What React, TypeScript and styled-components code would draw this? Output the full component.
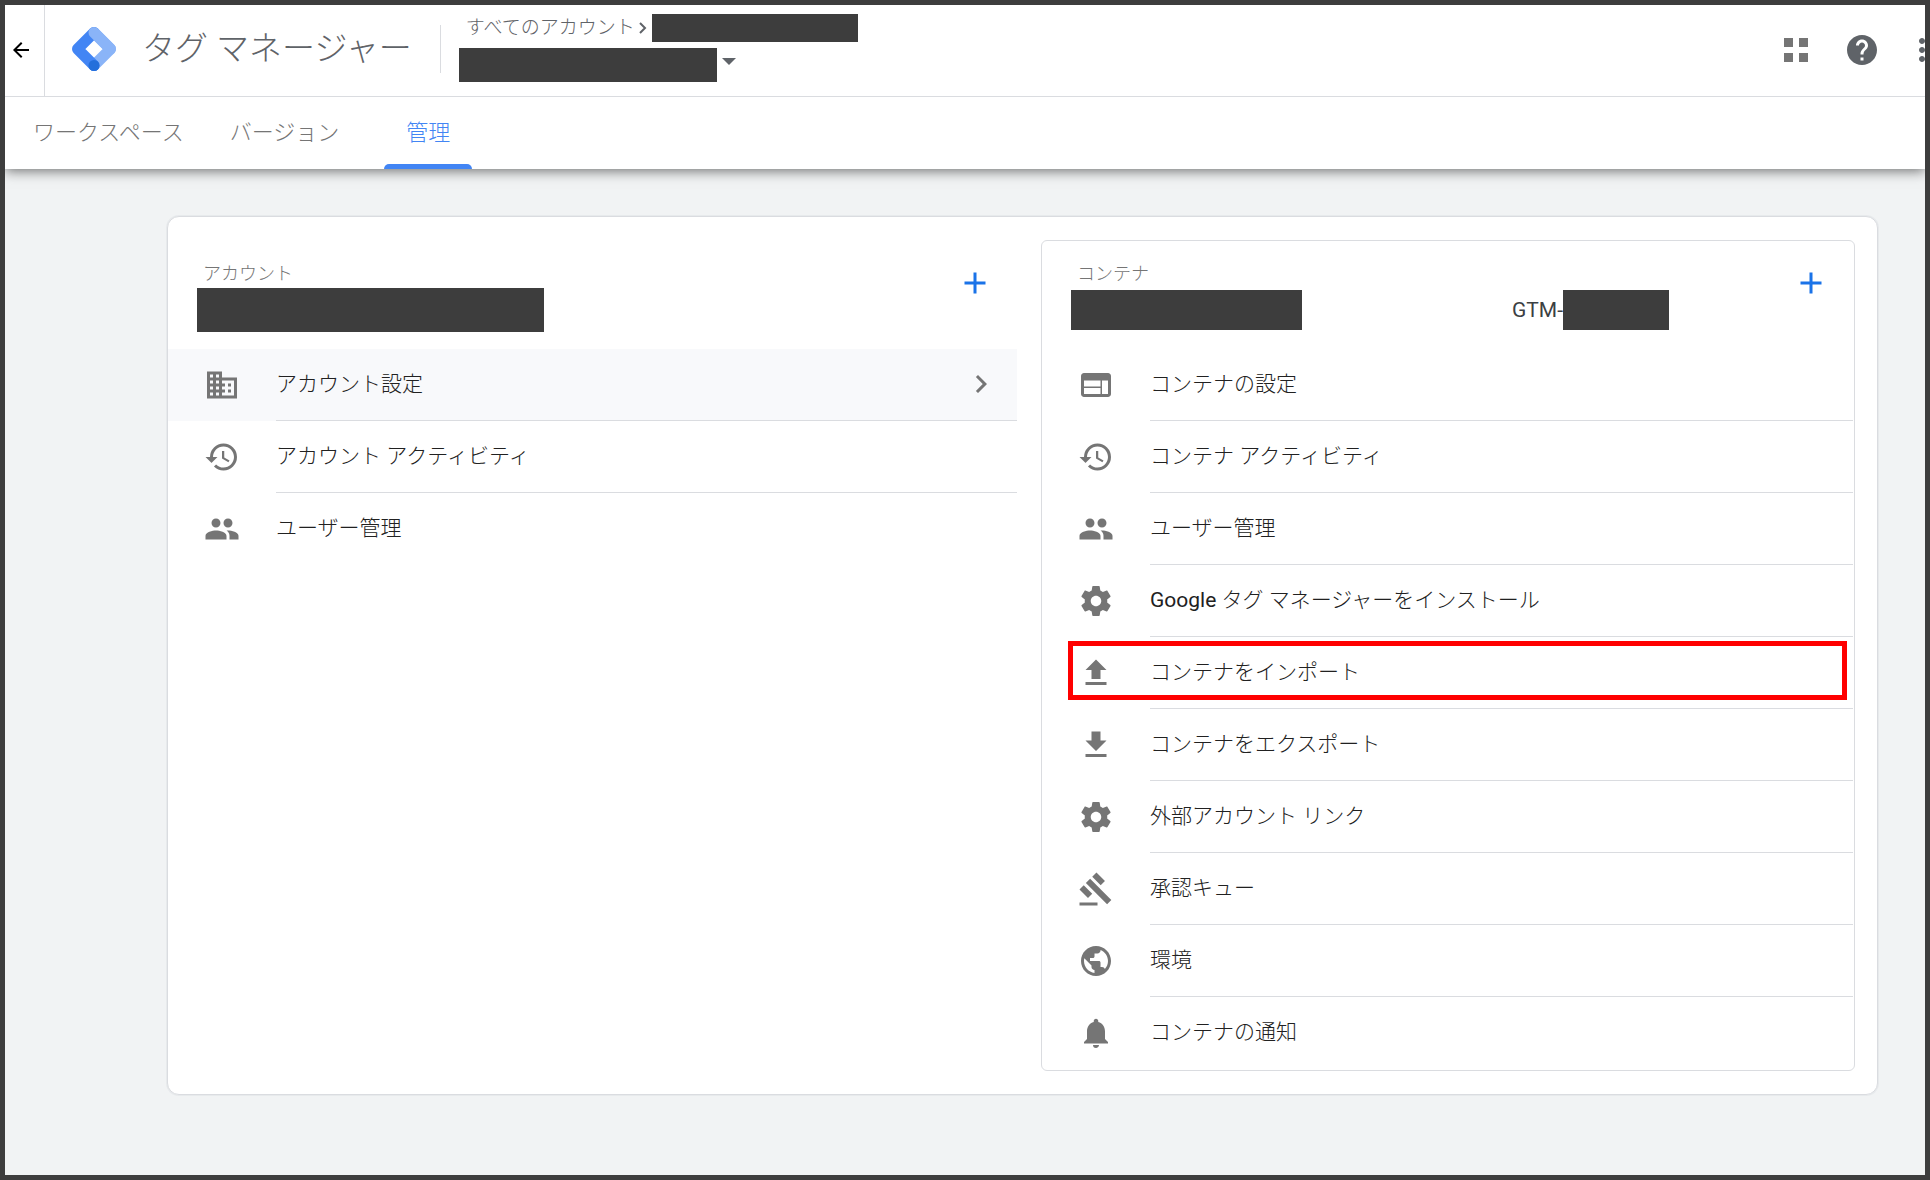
import React from "react";
import styled, { createGlobalStyle, css } from "styled-components";
import {
  MdArrowBack,
  MdChevronRight,
  MdAdd,
  MdGavel,
  MdHelp,
  MdHistory,
  MdMoreVert,
  MdNotifications,
  MdPublic,
} from "react-icons/md";

const color = {
  frame: "#3d3d3d",
  line: "#dadce0",
  page: "#f1f3f4",
  ink: "#212121",
  soft: "#5f6368",
  icon: "#757575",
  blue: "#4285f4",
  action: "#1a73e8",
  hover: "#f8f9fb",
  mark: "#ff0000",
};

const GlobalStyle = createGlobalStyle`
  *, *::before, *::after { box-sizing: border-box; }
  body {
    margin: 0;
    background: ${color.page};
    font-family: Roboto, "Noto Sans CJK JP", sans-serif;
    font-weight: 300;
    color: ${color.ink};
  }
  a { color: inherit; text-decoration: none; }
  button { padding: 0; border: 0; background: none; font: inherit; color: inherit; cursor: pointer; }
  ul { margin: 0; padding: 0; list-style: none; }
  svg { display: block; flex: none; }
`;

const Frame = styled.div`
  min-height: 100vh;
  border: 5px solid ${color.frame};
  overflow: hidden;
`;

const Header = styled.header`
  position: relative;
  background: #fff;
  box-shadow: 0 2px 12px rgba(0, 0, 0, 0.55);
`;

const TopBar = styled.div`
  display: flex;
  align-items: stretch;
  height: 92px;
  border-bottom: 1px solid ${color.line};
`;

const BackButton = styled.button`
  display: grid;
  place-items: center;
  width: 40px;
  padding: 0 8px 2px 0;
  border-right: 1px solid ${color.line};
  color: #000;
`;

const Brand = styled.div`
  display: flex;
  align-items: center;
  gap: 26px;
  padding: 0 28px 4px 27px;
`;

const BrandName = styled.h1`
  margin: 0;
  font-size: 33px;
  line-height: 48px;
  font-weight: 300;
  color: ${color.soft};
  white-space: nowrap;
`;

const BrandDivider = styled.div`
  width: 1px;
  height: 48px;
  margin: 20px 18px 0 0;
  background: ${color.line};
`;

const AccountPicker = styled.div`
  display: flex;
  flex-direction: column;
  gap: 6px;
  margin-top: 9px;
`;

const Crumbs = styled.div`
  display: flex;
  align-items: center;
  height: 28px;
  padding-left: 7px;
  font-size: 19px;
  line-height: 24px;
  color: ${color.soft};
  white-space: nowrap;
`;

const CrumbArrow = styled.svg`
  width: 8px;
  height: 12px;
  margin: 0 5px 0 4px;
`;

const PickerButton = styled.button`
  display: flex;
  align-items: flex-start;
  gap: 5px;
  color: ${color.soft};
`;

const Caret = styled.svg`
  width: 14px;
  height: 7px;
  margin-top: 10px;
`;

const Redacted = styled.span<{ $w: number; $h: number }>`
  display: block;
  flex: none;
  width: ${(p) => p.$w}px;
  height: ${(p) => p.$h}px;
  background: ${color.frame};
`;

const Tools = styled.div`
  display: flex;
  align-items: center;
  gap: 24px;
  margin: 0 -15px 0 auto;
  padding-bottom: 2px;
  color: ${color.soft};
`;

const ToolButton = styled.button`
  display: grid;
  place-items: center;
  width: 36px;
  height: 36px;
`;

const AppsButton = styled(ToolButton)`
  margin-right: 6px;
  color: ${color.icon};
`;

const Tabs = styled.nav`
  display: flex;
  gap: 2px;
  height: 72px;
  padding-left: 6px;
`;

const Tab = styled.a<{ $active?: boolean }>`
  display: flex;
  align-items: center;
  padding: 0 22px 1px;
  font-size: 22px;
  line-height: 32px;
  color: ${color.icon};
  white-space: nowrap;
  ${(p) =>
    p.$active &&
    css`
      position: relative;
      margin-left: 21px;
      color: ${color.blue};
      &::after {
        content: "";
        position: absolute;
        inset: auto 0 0;
        height: 5px;
        border-radius: 5px 5px 0 0;
        background: ${color.blue};
      }
    `}
`;

const Card = styled.main`
  display: grid;
  grid-template-columns: minmax(0, 849fr) minmax(0, 814fr);
  gap: 24px;
  margin: 47px 47px 80px 162px;
  padding: 23px 22px 23px 0;
  border: 1px solid ${color.line};
  border-radius: 12px;
  background: #fff;
  box-shadow: 0 0 0 1px rgba(218, 220, 224, 0.4);
`;

const Panel = styled.section<{ $boxed?: boolean }>`
  padding: ${(p) => (p.$boxed ? "0 1px 1px 0" : "1px 0 0")};
  border: ${(p) => (p.$boxed ? `1px solid ${color.line}` : "0")};
  border-radius: 6px;
`;

const PanelHead = styled.div`
  display: flex;
  align-items: flex-start;
  height: 108px;
  padding: 20px 24px 0 29px;
`;

const PanelInfo = styled.div`
  flex: 1;
`;

const PanelLabel = styled.h2`
  margin: 0 0 1px 6px;
  font-size: 18px;
  line-height: 26px;
  font-weight: 300;
  color: ${color.icon};
`;

const PanelNames = styled.div`
  display: flex;
  align-items: center;
  justify-content: space-between;
  height: 44px;
  padding-right: 124px;
`;

const ContainerId = styled.span`
  display: flex;
  align-items: center;
  font-size: 21px;
  font-weight: 400;
  color: #3c4043;
`;

const AddButton = styled.button`
  margin-top: 4px;
  color: ${color.action};
`;

const Label = styled.span`
  flex: 1;
  display: flex;
  align-items: center;
  align-self: stretch;
  padding-bottom: 2px;
`;

const Row = styled.li<{ $selected?: boolean; $marked?: boolean }>`
  position: relative;
  background: ${(p) => (p.$selected ? color.hover : "transparent")};

  &:not(:last-child) ${Label} {
    border-bottom: 1px solid ${color.line};
  }

  ${(p) =>
    p.$marked &&
    css`
      &::after {
        content: "";
        position: absolute;
        inset: 4px 6px 9px 26px;
        border: 5px solid ${color.mark};
        pointer-events: none;
      }
    `}
`;

const RowLink = styled.a`
  display: flex;
  align-items: center;
  gap: 36px;
  height: 72px;
  padding-left: 36px;
  font-family: Roboto, "Noto Sans CJK JP Light", "Noto Sans CJK JP", sans-serif;
  font-size: 21px;
  font-weight: 400;
  line-height: 32px;

  & > svg {
    color: ${color.icon};
  }
`;

const RowArrow = styled(MdChevronRight)`
  margin: 0 18px 0 auto;
  color: ${color.icon};
`;

type Glyph = React.ComponentType<{ size?: number }>;

const pathIcon =
  (d: string): Glyph =>
  ({ size = 36 }) => (
    <svg width={size} height={size} viewBox="0 0 24 24" fill="currentColor" aria-hidden="true">
      <path d={d} />
    </svg>
  );

const Business = pathIcon(
  "M12 7V3H2v18h20V7H12zM6 19H4v-2h2v2zm0-4H4v-2h2v2zm0-4H4V9h2v2zm0-4H4V5h2v2zm4 12H8v-2h2v2zm0-4H8v-2h2v2zm0-4H8V9h2v2zm0-4H8V5h2v2zm10 12h-8v-2h2v-2h-2v-2h2v-2h-2V9h8v10zm-2-8h-2v2h2v-2zm0 4h-2v2h2v-2z",
);
const Web = pathIcon(
  "M20 4H4c-1.1 0-1.99.9-1.99 2L2 18c0 1.1.9 2 2 2h16c1.1 0 2-.9 2-2V6c0-1.1-.9-2-2-2zm-5 14H4v-4h11v4zm0-5H4V9h11v4zm5 5h-4V9h4v9z",
);
const People = pathIcon(
  "M16 11c1.66 0 2.99-1.34 2.99-3S17.66 5 16 5c-1.66 0-3 1.34-3 3s1.34 3 3 3zm-8 0c1.66 0 2.99-1.34 2.99-3S9.66 5 8 5C6.34 5 5 6.34 5 8s1.34 3 3 3zm0 2c-2.33 0-7 1.17-7 3.5V19h14v-2.5c0-2.33-4.67-3.5-7-3.5zm8 0c-.29 0-.62.02-.97.05 1.16.84 1.97 1.97 1.97 3.45V19h6v-2.5c0-2.33-4.67-3.5-7-3.5z",
);
const Settings = pathIcon(
  "M19.43 12.98c.04-.32.07-.64.07-.98s-.03-.66-.07-.98l2.11-1.65c.19-.15.24-.42.12-.64l-2-3.46c-.12-.22-.39-.3-.61-.22l-2.49 1c-.52-.4-1.08-.73-1.69-.98l-.38-2.65C14.46 2.18 14.25 2 14 2h-4c-.25 0-.46.18-.49.42l-.38 2.65c-.61.25-1.17.59-1.69.98l-2.49-1c-.23-.09-.49 0-.61.22l-2 3.46c-.13.22-.07.49.12.64l2.11 1.65c-.04.32-.07.65-.07.98s.03.66.07.98l-2.11 1.65c-.19.15-.24.42-.12.64l2 3.46c.12.22.39.3.61.22l2.49-1c.52.4 1.08.73 1.69.98l.38 2.65c.03.24.24.42.49.42h4c.25 0 .46-.18.49-.42l.38-2.65c.61-.25 1.17-.59 1.69-.98l2.49 1c.23.09.49 0 .61-.22l2-3.46c.12-.22.07-.49-.12-.64l-2.11-1.65zM12 15.5c-1.93 0-3.5-1.57-3.5-3.5s1.57-3.5 3.5-3.5 3.5 1.57 3.5 3.5-1.57 3.5-3.5 3.5z",
);
const Upload = pathIcon("M5 20h14v-2H5v2zm0-10h4v6h6v-6h4l-7-7-7 7z");
const Download = pathIcon("M5 20h14v-2H5v2zM19 9h-4V3H9v6H5l7 7 7-7z");

const Logo = () => (
  <svg width="44" height="44" viewBox="0 0 44 44" fill="none" aria-hidden="true">
    <g strokeWidth="11" strokeLinejoin="round" strokeLinecap="round">
      <path d="M22 38.5 38.5 22 22 5.5" stroke="#8ab4f8" />
      <path d="M22 5.5 5.5 22 22 38.5" stroke="#4285f4" />
      <path d="M22 5.5 38.5 22" stroke="#8ab4f8" />
    </g>
    <circle cx="22" cy="38.5" r="5.5" fill="#246fdb" />
  </svg>
);

const AppsGrid = () => (
  <svg width="24" height="24" viewBox="0 0 24 24" fill="currentColor" aria-hidden="true">
    <path d="M0 0h9v9H0zM15 0h9v9h-9zM0 15h9v9H0zM15 15h9v9h-9z" />
  </svg>
);

type Item = { icon: Glyph; text: string; selected?: boolean; marked?: boolean };

const accountItems: Item[] = [
  { icon: Business, text: "アカウント設定", selected: true },
  { icon: MdHistory, text: "アカウント アクティビティ" },
  { icon: People, text: "ユーザー管理" },
];

const containerItems: Item[] = [
  { icon: Web, text: "コンテナの設定" },
  { icon: MdHistory, text: "コンテナ アクティビティ" },
  { icon: People, text: "ユーザー管理" },
  { icon: Settings, text: "Google タグ マネージャーをインストール" },
  { icon: Upload, text: "コンテナをインポート", marked: true },
  { icon: Download, text: "コンテナをエクスポート" },
  { icon: Settings, text: "外部アカウント リンク" },
  { icon: MdGavel, text: "承認キュー" },
  { icon: MdPublic, text: "環境" },
  { icon: MdNotifications, text: "コンテナの通知" },
];

const Menu = ({ items }: { items: Item[] }) => (
  <ul>
    {items.map(({ icon: Icon, text, selected, marked }) => (
      <Row key={text} $selected={selected} $marked={marked}>
        <RowLink href="#">
          <Icon size={36} />
          <Label>
            {text}
            {selected && <RowArrow size={36} />}
          </Label>
        </RowLink>
      </Row>
    ))}
  </ul>
);

export default function App() {
  return (
    <>
      <GlobalStyle />
      <Frame>
        <Header>
          <TopBar>
            <BackButton aria-label="戻る">
              <MdArrowBack size={24} />
            </BackButton>
            <Brand>
              <Logo />
              <BrandName>タグ マネージャー</BrandName>
            </Brand>
            <BrandDivider />
            <AccountPicker>
              <Crumbs>
                <a href="#">すべてのアカウント</a>
                <CrumbArrow viewBox="0 0 8 12" fill="none" stroke="currentColor" strokeWidth="2">
                  <path d="M1 1l5 5-5 5" />
                </CrumbArrow>
                <Redacted $w={206} $h={28} />
              </Crumbs>
              <PickerButton aria-label="コンテナを選択">
                <Redacted $w={258} $h={34} />
                <Caret viewBox="0 0 14 7" fill="currentColor">
                  <path d="M0 0h14L7 7z" />
                </Caret>
              </PickerButton>
            </AccountPicker>
            <Tools>
              <AppsButton aria-label="アプリ">
                <AppsGrid />
              </AppsButton>
              <ToolButton aria-label="ヘルプ">
                <MdHelp size={36} />
              </ToolButton>
              <ToolButton aria-label="その他">
                <MdMoreVert size={36} />
              </ToolButton>
            </Tools>
          </TopBar>
          <Tabs>
            <Tab href="#">ワークスペース</Tab>
            <Tab href="#">バージョン</Tab>
            <Tab href="#" $active aria-current="page">
              管理
            </Tab>
          </Tabs>
        </Header>

        <Card>
          <Panel>
            <PanelHead>
              <PanelInfo>
                <PanelLabel>アカウント</PanelLabel>
                <PanelNames>
                  <Redacted $w={347} $h={44} />
                </PanelNames>
              </PanelInfo>
              <AddButton aria-label="アカウントを作成">
                <MdAdd size={36} />
              </AddButton>
            </PanelHead>
            <Menu items={accountItems} />
          </Panel>
          <Panel $boxed>
            <PanelHead>
              <PanelInfo>
                <PanelLabel>コンテナ</PanelLabel>
                <PanelNames>
                  <Redacted $w={231} $h={40} />
                  <ContainerId>
                    GTM-
                    <Redacted $w={106} $h={40} />
                  </ContainerId>
                </PanelNames>
              </PanelInfo>
              <AddButton aria-label="コンテナを作成">
                <MdAdd size={36} />
              </AddButton>
            </PanelHead>
            <Menu items={containerItems} />
          </Panel>
        </Card>
      </Frame>
    </>
  );
}
